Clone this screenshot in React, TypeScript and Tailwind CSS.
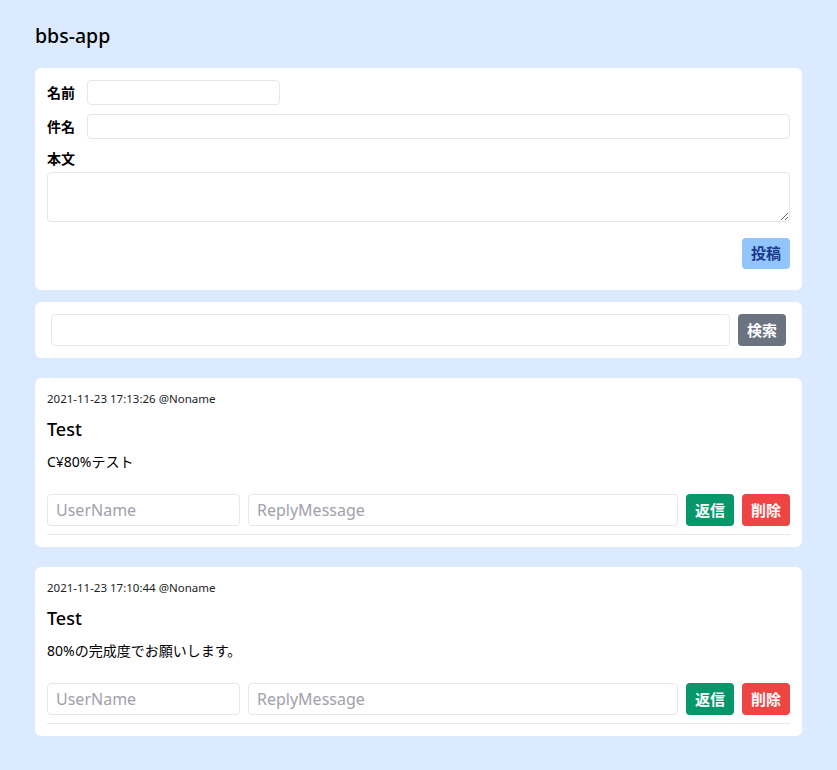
import React from "react";

const font = { fontFamily: '"Noto Sans", "Noto Sans CJK JP", sans-serif' };

function Post({ meta, title, body }: { meta: string; title: string; body: string }) {
  return (
    <div className="bg-white rounded-md px-3 pt-3 pb-3">
      <div className="text-[11.5px] leading-4 text-[#222] h-4 flex items-center mt-[1px]">{meta}</div>
      <div className="text-[18px] font-medium leading-7 mt-[8px] text-black">{title}</div>
      <div className="text-[14px] leading-5 mt-[9px] text-black">{body}</div>
      <div className="flex gap-2 mt-[22px] h-8">
        <input
          placeholder="UserName"
          className="w-[193px] h-8 border border-[#e5e7eb] rounded px-2 text-[16px] placeholder:text-[#a1a1aa] outline-none"
          style={font}
        />
        <input
          placeholder="ReplyMessage"
          className="flex-1 h-8 border border-[#e5e7eb] rounded px-2 text-[16px] placeholder:text-[#a1a1aa] outline-none"
          style={font}
        />
        <button className="w-12 h-8 rounded bg-[#059669] text-white font-bold text-[15px]">返信</button>
        <button className="w-12 h-8 rounded bg-[#ef4444] text-white font-bold text-[15px]">削除</button>
      </div>
      <div className="border-t border-[#e5e7eb] mt-[8px]"></div>
    </div>
  );
}

export default function App() {
  return (
    <div className="min-h-[770px] bg-[#dbeafe] px-[35px] pt-[22px] pb-8" style={font}>
      <h1 className="text-[19.5px] font-medium leading-7 text-black">bbs-app</h1>
      <div className="bg-white rounded-md mt-[18px] px-3 pt-3 pb-[21px]">
        <div className="flex items-center gap-2">
          <label className="text-[14px] font-bold w-8">名前</label>
          <input className="w-[193px] h-[25px] border border-[#e5e7eb] rounded outline-none" />
        </div>
        <div className="flex items-center gap-2 mt-[9px]">
          <label className="text-[14px] font-bold w-8">件名</label>
          <input className="flex-1 h-[25px] border border-[#e5e7eb] rounded outline-none" />
        </div>
        <div className="text-[14px] font-bold mt-[10px] leading-5">本文</div>
        <textarea className="block w-full h-[50px] border border-[#e5e7eb] rounded mt-[3px] outline-none" />
        <div className="flex justify-end mt-[16px]">
          <button className="w-12 h-[31px] rounded bg-[#93c5fd] text-[#1e3a8a] font-bold text-[15px]">投稿</button>
        </div>
      </div>
      <div className="bg-white rounded-md mt-3 px-4 py-3 flex gap-2">
        <input className="flex-1 h-8 border border-[#e5e7eb] rounded outline-none" />
        <button className="w-12 h-8 rounded bg-[#6b7280] text-white font-bold text-[15px]">検索</button>
      </div>
      <div className="mt-[20px] flex flex-col gap-5">
        <Post meta="2021-11-23 17:13:26 @Noname" title="Test" body="C¥80%テスト" />
        <Post meta="2021-11-23 17:10:44 @Noname" title="Test" body="80%の完成度でお願いします。" />
      </div>
    </div>
  );
}
